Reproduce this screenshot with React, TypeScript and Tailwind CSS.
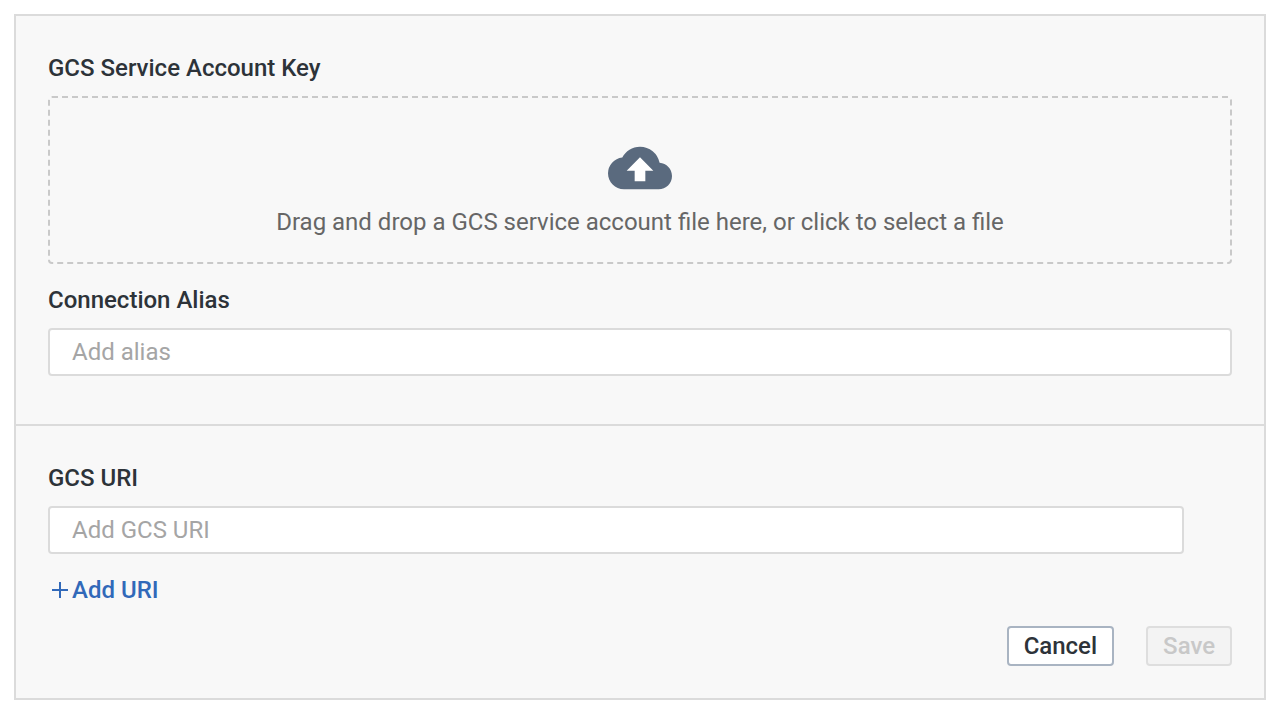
const label = "block text-2xl leading-8 font-medium text-[#2d3339]";
const field =
  "block h-12 w-full rounded-sm border-2 border-[#dbdbdb] bg-white px-[22px] text-2xl text-[#2d3339] placeholder:text-[#a5a5a5]";

function CloudUploadIcon() {
  return (
    <svg viewBox="0 0 24 24" className="size-16" aria-hidden="true">
      <path
        fill="#5a6a7e"
        d="M19.35 10.04A7.49 7.49 0 0 0 12 4C9.11 4 6.6 5.64 5.35 8.04A5.994 5.994 0 0 0 0 14c0 3.31 2.69 6 6 6h13c2.76 0 5-2.24 5-5 0-2.64-2.05-4.78-4.65-4.96z"
      />
      <path fill="#ffffff" d="M14 13v4h-4v-4H7l5-5 5 5z" />
    </svg>
  );
}

export default function App() {
  return (
    <main className="p-3.5 font-['Roboto',sans-serif]">
      <form className="border-2 border-[#dbdbdb] bg-[#f8f8f8]">
        <section className="border-b-2 border-[#dbdbdb] px-8 pt-9 pb-12">
          <label htmlFor="key" className={label}>
            GCS Service Account Key
          </label>
          <button
            id="key"
            type="button"
            className="mt-3 flex h-[168px] w-full flex-col items-center rounded-sm border-2 border-dashed border-[#c9c9c9] pt-[38px] text-2xl leading-8 text-[#666666]"
          >
            <CloudUploadIcon />
            <span className="mt-1.5">
              Drag and drop a GCS service account file here, or click to select a file
            </span>
          </button>
          <label htmlFor="alias" className={"mt-5 " + label}>
            Connection Alias
          </label>
          <input id="alias" placeholder="Add alias" className={"mt-3 " + field} />
        </section>
        <section className="px-8 pt-9 pb-8">
          <label htmlFor="uri" className={label}>
            GCS URI
          </label>
          <div className="mt-3 pr-12">
            <input id="uri" placeholder="Add GCS URI" className={field} />
          </div>
          <button
            type="button"
            className="mt-5 flex items-center text-2xl leading-8 font-medium text-[#3169b9]"
          >
            <svg
              viewBox="0 0 24 24"
              className="size-6"
              stroke="currentColor"
              strokeWidth="2"
              aria-hidden="true"
            >
              <path d="M12 4v16M4 12h16" />
            </svg>
            Add URI
          </button>
          <div className="mt-5 flex justify-end gap-8">
            <button
              type="button"
              className="flex h-10 items-center rounded-sm border-2 border-[#a9b4c2] bg-white px-[15px] text-2xl leading-8 font-medium text-[#2d3339]"
            >
              Cancel
            </button>
            <button
              type="submit"
              disabled
              className="flex h-10 items-center rounded-sm border-2 border-[#dedede] bg-[#f3f3f3] px-[15px] text-2xl leading-8 font-medium text-[#c8c8c8]"
            >
              Save
            </button>
          </div>
        </section>
      </form>
    </main>
  );
}
